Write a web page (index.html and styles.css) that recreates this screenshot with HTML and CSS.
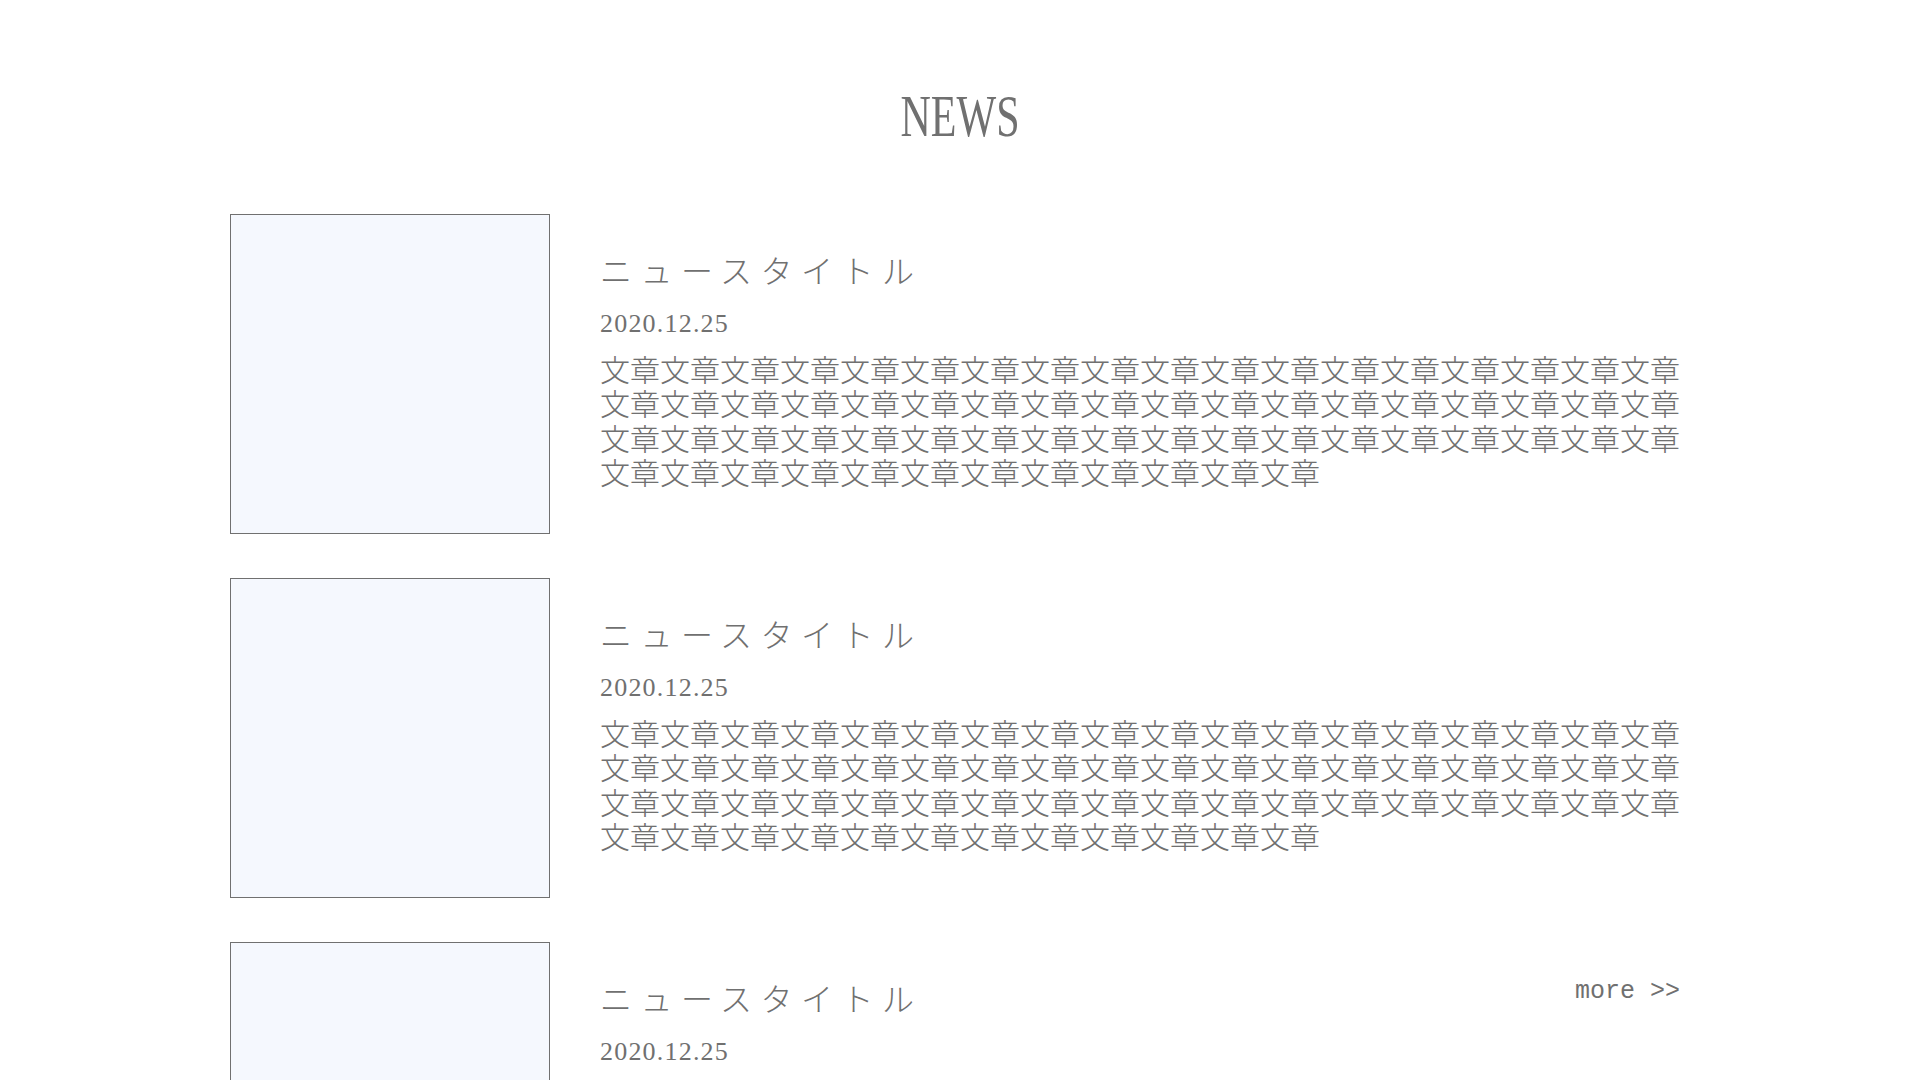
FILE: index.html
```html
<!DOCTYPE html>
<html lang="ja">
<head>
<meta charset="utf-8">
<title>NEWS</title>
<link rel="stylesheet" href="styles.css">
</head>
<body>
<section class="news">
  <h2 class="news-heading"><span class="news-heading-text">NEWS</span></h2>
  <div class="news-list">
    <article class="news-item">
      <div class="news-thumb"></div>
      <div class="news-body">
        <h3 class="news-title">ニュースタイトル</h3>
        <p class="news-date">2020.12.25</p>
        <p class="news-text">文章文章文章文章文章文章文章文章文章文章文章文章文章文章文章文章文章文章文章文章文章文章文章文章文章文章文章文章文章文章文章文章文章文章文章文章文章文章文章文章文章文章文章文章文章文章文章文章文章文章文章文章文章文章文章文章文章文章文章文章文章文章文章文章文章文章</p>
      </div>
    </article>
    <article class="news-item">
      <div class="news-thumb"></div>
      <div class="news-body">
        <h3 class="news-title">ニュースタイトル</h3>
        <p class="news-date">2020.12.25</p>
        <p class="news-text">文章文章文章文章文章文章文章文章文章文章文章文章文章文章文章文章文章文章文章文章文章文章文章文章文章文章文章文章文章文章文章文章文章文章文章文章文章文章文章文章文章文章文章文章文章文章文章文章文章文章文章文章文章文章文章文章文章文章文章文章文章文章文章文章文章文章</p>
      </div>
    </article>
    <article class="news-item">
      <div class="news-thumb"></div>
      <div class="news-body">
        <h3 class="news-title">ニュースタイトル</h3>
        <p class="news-date">2020.12.25</p>
        <p class="news-text">文章文章文章文章文章文章文章文章文章文章文章文章文章文章文章文章文章文章文章文章文章文章文章文章文章文章文章文章文章文章文章文章文章文章文章文章文章文章文章文章文章文章文章文章文章文章文章文章文章文章文章文章文章文章文章文章文章文章文章文章文章文章文章文章文章文章</p>
      </div>
    </article>
  </div>
  <a class="news-more" href="#">more &gt;&gt;</a>
</section>
</body>
</html>
```

FILE: styles.css
```css
html, body {
  margin: 0;
  padding: 0;
  background: #ffffff;
}
body {
  font-family: "Liberation Serif", "Noto Sans CJK JP", serif;
  color: #707070;
  overflow: hidden;
  height: 1080px;
}
.news {
  position: relative;
  width: 1460px;
  margin: 0 auto;
  padding-top: 86px;
}
.news-heading {
  margin: 0;
  font-size: 60px;
  font-weight: normal;
  line-height: 1;
  text-align: center;
}
.news-heading-text {
  display: inline-block;
  transform: scaleX(0.7);
}
.news-list {
  margin-top: 68px;
  display: flex;
  flex-direction: column;
  gap: 44px;
}
.news-item {
  display: flex;
  gap: 50px;
}
.news-thumb {
  flex: none;
  width: 320px;
  height: 320px;
  box-sizing: border-box;
  border: 1px solid #707070;
  background: #f5f8fe;
}
.news-body {
  flex: 1;
  padding-top: 36px;
}
.news-title {
  margin: 0;
  font-family: "Noto Sans CJK JP", sans-serif;
  font-size: 32px;
  font-weight: 300;
  letter-spacing: 8.5px;
  line-height: 1.2;
}
.news-date {
  margin: 20px 0 0;
  font-family: "Liberation Serif", serif;
  font-size: 26px;
  letter-spacing: 1.2px;
  line-height: 1.2;
}
.news-text {
  margin: 11px 0 0;
  font-family: "Noto Sans CJK JP", sans-serif;
  font-weight: 300;
  font-size: 30px;
  line-height: 34.5px;
  word-break: break-all;
}
.news-more {
  position: absolute;
  right: 10px;
  top: 977px;
  font-family: "Liberation Mono", monospace;
  font-size: 25px;
  line-height: 30px;
  color: #707070;
  text-decoration: none;
}
```
